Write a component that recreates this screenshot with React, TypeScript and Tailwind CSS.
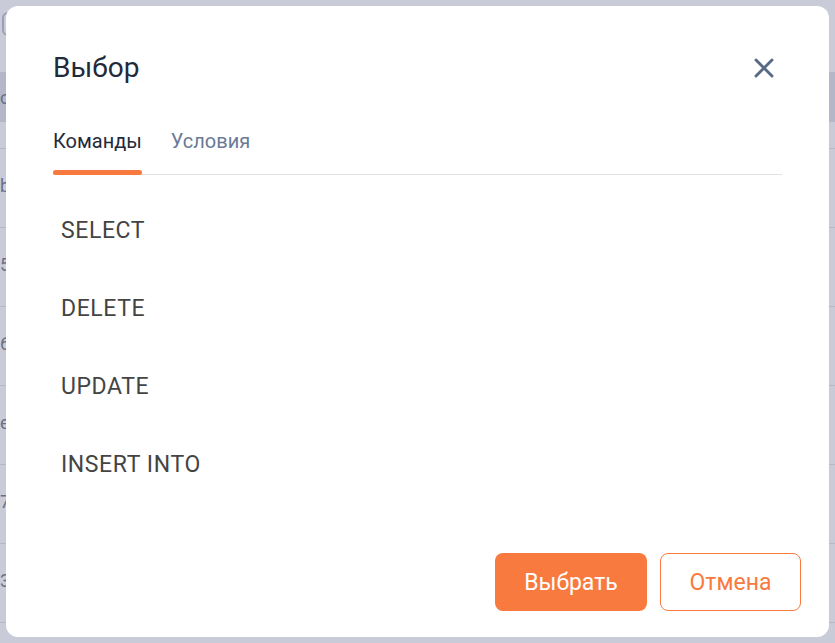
import { X } from "lucide-react";

const rows = ["b", "5", "6", "e", "7", "3"];
const commands = ["SELECT", "DELETE", "UPDATE", "INSERT INTO"];

function Backdrop() {
  return (
    <div className="flex h-full flex-col bg-[#c9cbd8]">
      <div className="h-[72px] pl-[2px] pt-[12px]">
        <div className="h-[24px] w-[20px] rounded-md border-2 border-[#9aa0b4]" />
      </div>
      <div className="flex h-[50px] items-center bg-[#b3b7c7] text-[18px] text-[#6b7085]">c</div>
      <div className="h-[27px] border-b border-[#b6b9c8]" />
      {rows.map((r) => (
        <div
          key={r}
          className="flex h-[79px] items-center border-b border-[#b6b9c8] pb-[6px] text-[18px] text-[#6b7085]"
        >
          {r}
        </div>
      ))}
    </div>
  );
}

export default function App() {
  return (
    <div className="relative h-[643px] w-[835px] overflow-hidden font-['Roboto',sans-serif]">
      <Backdrop />
      <div className="absolute left-[6px] top-[6px] flex h-[631px] w-[823px] flex-col rounded-[12px] bg-white pb-[26px] pl-[47px] pr-[28px] pt-[34px]">
        <div className="flex items-center justify-between pr-[21px]">
          <h1 className="text-[28px] leading-[56px] text-[#1f2a3d]">Выбор</h1>
          <button type="button" className="text-[#5a6a85]">
            <X size={32} strokeWidth={2.2} />
          </button>
        </div>

        <div className="mr-[19px] mt-[32px] flex gap-[29px] border-b border-[#e0e0e0]">
          <div className="relative pb-[20px] text-[20px] leading-[26px] text-[#1f2a3d]">
            Команды
            <span className="absolute -bottom-[1px] left-0 right-0 h-[5px] rounded-full bg-[#f97a3e]" />
          </div>
          <div className="pb-[20px] text-[20px] leading-[26px] text-[#6b7a96]">Условия</div>
        </div>

        <ul className="mt-[17px] flex flex-col pl-[8px]">
          {commands.map((c) => (
            <li key={c} className="flex h-[78px] items-center text-[23px] tracking-[0.6px] text-[#444444]">
              {c}
            </li>
          ))}
        </ul>

        <div className="mt-auto flex justify-end gap-[13px]">
          <button
            type="button"
            className="h-[58px] w-[152px] rounded-[8px] bg-[#f97a3e] pt-[2px] text-[23px] text-white"
          >
            Выбрать
          </button>
          <button
            type="button"
            className="h-[58px] w-[141px] rounded-[8px] border border-[#f97a3e] pt-[2px] text-[23px] text-[#f97a3e]"
          >
            Отмена
          </button>
        </div>
      </div>
    </div>
  );
}
